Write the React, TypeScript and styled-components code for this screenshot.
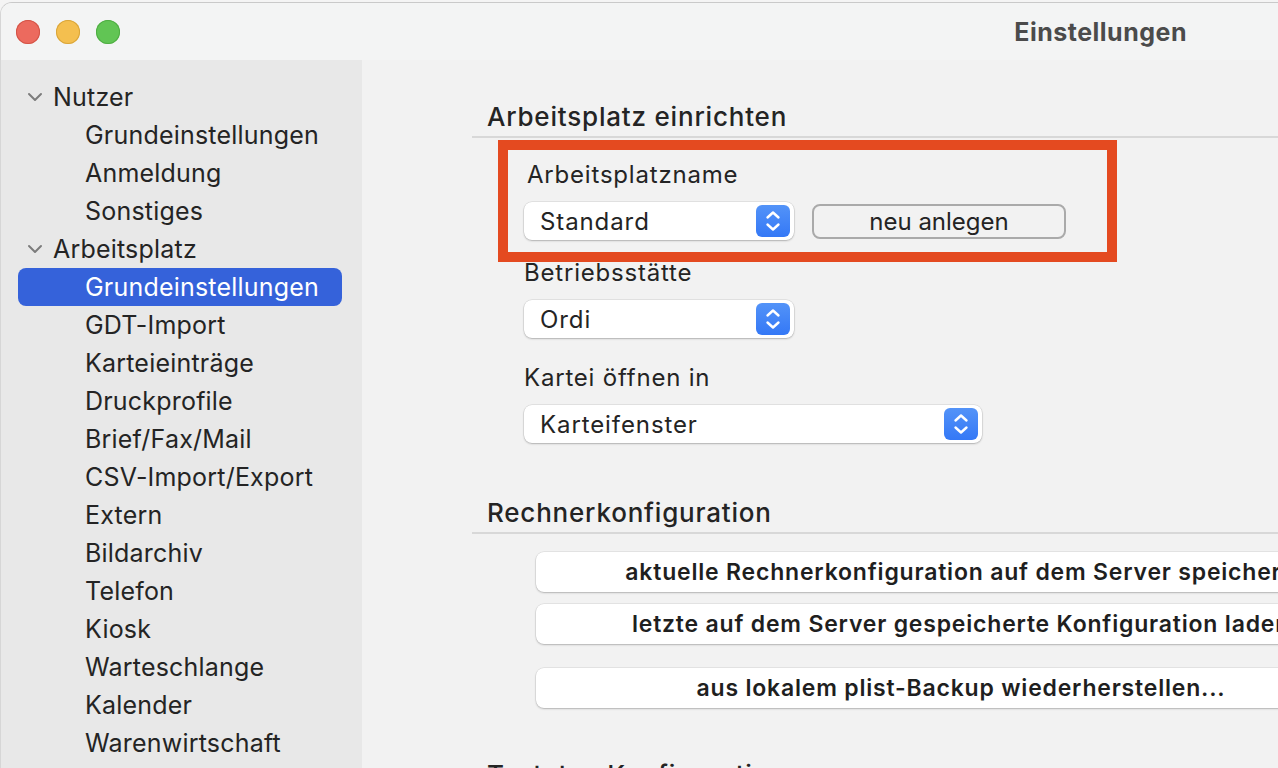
import styled, { createGlobalStyle } from "styled-components";

const GlobalStyle = createGlobalStyle`
  html, body {
    margin: 0;
    padding: 0;
    background: #f4f4f4;
    font-family: Inter, "Noto Sans", "Liberation Sans", sans-serif;
    color: #242424;
  }
`;

const StyledWindow = styled.div`
  width: 1278px;
  height: 766px;
  margin-top: 2px;
  border-top: 1px solid #c9c9c9;
  border-left: 1px solid #d6d6d6;
  border-top-left-radius: 12px;
  box-sizing: border-box;
  overflow: hidden;
  display: flex;
  flex-direction: column;
  background: #f2f2f2;
`;

const StyledTitleBar = styled.div`
  height: 57px;
  flex-shrink: 0;
  display: flex;
  align-items: center;
  background: #f3f4f4;
  padding-left: 15px;
`;

const StyledLight = styled.span<{ $color: string; $edge: string }>`
  width: 24px;
  height: 24px;
  border-radius: 50%;
  background: ${(p) => p.$color};
  box-shadow: inset 0 0 0 1px ${(p) => p.$edge};
  margin-right: 16px;
`;

const StyledTitle = styled.div`
  margin-left: auto;
  margin-right: 91px;
  font-size: 25px;
  font-weight: 700;
  color: #4b4b4b;
  letter-spacing: 0.5px;
`;

const StyledBody = styled.div`
  flex: 1;
  display: flex;
  min-height: 0;
`;

const StyledSidebar = styled.div`
  width: 361px;
  flex-shrink: 0;
  background: #e8e8e8;
  padding-top: 18px;
  box-sizing: border-box;
`;

const StyledItem = styled.div<{ $group?: boolean; $selected?: boolean }>`
  height: 38px;
  margin: 0 20px 0 17px;
  border-radius: 8px;
  display: flex;
  align-items: center;
  padding-left: ${(p) => (p.$group ? "9px" : "67px")};
  font-size: 25px;
  letter-spacing: 0.2px;
  color: ${(p) => (p.$selected ? "#ffffff" : "#242424")};
  background: ${(p) => (p.$selected ? "#3562da" : "transparent")};
`;

const StyledChevron = styled.svg`
  width: 16px;
  height: 10px;
  margin-right: 10px;
`;

const StyledContent = styled.div`
  flex: 1;
  padding-left: 110px;
  overflow: hidden;
`;

const StyledSectionHeader = styled.div<{ $top: number }>`
  margin-top: ${(p) => p.$top}px;
  padding: 0 0 4px 15px;
  height: 30px;
  line-height: 30px;
  font-size: 26px;
  font-weight: 500;
  letter-spacing: 0.8px;
  border-bottom: 2px solid #d8d8d8;
  white-space: nowrap;
`;

const StyledFields = styled.div`
  padding-left: 52px;
`;

const StyledField = styled.div<{ $top: number }>`
  position: relative;
  margin-top: ${(p) => p.$top}px;
`;

const StyledLabel = styled.div<{ $indent?: number }>`
  height: 28px;
  line-height: 28px;
  font-size: 24px;
  letter-spacing: 0.8px;
  padding-left: ${(p) => p.$indent ?? 0}px;
  margin-bottom: 13px;
`;

const StyledRow = styled.div`
  display: flex;
  align-items: center;
`;

const StyledSelect = styled.div<{ $width: number }>`
  width: ${(p) => p.$width}px;
  height: 38px;
  box-sizing: border-box;
  background: #ffffff;
  border-radius: 8px;
  box-shadow: 0 1px 2px rgba(0, 0, 0, 0.22), 0 0 0 0.5px rgba(0, 0, 0, 0.12);
  display: flex;
  align-items: center;
  padding: 0 4px 0 16px;
  font-size: 24px;
  letter-spacing: 0.9px;
`;

const StyledStepper = styled.span`
  margin-left: auto;
  width: 34px;
  height: 32px;
  border-radius: 6px;
  background: linear-gradient(#5393f8, #3478f6);
  display: flex;
  align-items: center;
  justify-content: center;
`;

const StyledPlainButton = styled.div`
  margin-left: 18px;
  width: 254px;
  height: 35px;
  box-sizing: border-box;
  border: 2px solid #aaaaaa;
  border-radius: 8px;
  display: flex;
  align-items: center;
  justify-content: center;
  font-size: 24px;
`;

const StyledHighlight = styled.div`
  position: absolute;
  left: -26px;
  top: -21px;
  width: 619px;
  height: 122px;
  box-sizing: border-box;
  border: 10px solid #e44a20;
  pointer-events: none;
`;

const StyledActions = styled.div`
  padding: 18px 0 0 64px;
  display: flex;
  flex-direction: column;
`;

const StyledActionButton = styled.div<{ $gap: number }>`
  width: 850px;
  height: 40px;
  margin-top: ${(p) => p.$gap}px;
  flex-shrink: 0;
  background: #ffffff;
  border-radius: 8px;
  box-shadow: 0 1px 2px rgba(0, 0, 0, 0.22), 0 0 0 0.5px rgba(0, 0, 0, 0.1);
  display: flex;
  align-items: center;
  justify-content: center;
  font-size: 23px;
  font-weight: 600;
  letter-spacing: 0.8px;
  color: #1f1f1f;
  white-space: nowrap;
`;

const sidebarItems = [
  { label: "Nutzer", group: true },
  { label: "Grundeinstellungen" },
  { label: "Anmeldung" },
  { label: "Sonstiges" },
  { label: "Arbeitsplatz", group: true },
  { label: "Grundeinstellungen", selected: true },
  { label: "GDT-Import" },
  { label: "Karteieinträge" },
  { label: "Druckprofile" },
  { label: "Brief/Fax/Mail" },
  { label: "CSV-Import/Export" },
  { label: "Extern" },
  { label: "Bildarchiv" },
  { label: "Telefon" },
  { label: "Kiosk" },
  { label: "Warteschlange" },
  { label: "Kalender" },
  { label: "Warenwirtschaft" },
];

const Stepper = () => (
  <StyledStepper>
    <svg width="34" height="32" viewBox="0 0 34 32" fill="none">
      <path d="M11.5 12.5 L17 7.5 L22.5 12.5" stroke="#fff" strokeWidth="2.4" strokeLinecap="round" strokeLinejoin="round" />
      <path d="M11.5 19.5 L17 24.5 L22.5 19.5" stroke="#fff" strokeWidth="2.4" strokeLinecap="round" strokeLinejoin="round" />
    </svg>
  </StyledStepper>
);

const Select = ({ value, width }: { value: string; width: number }) => (
  <StyledSelect $width={width}>
    {value}
    <Stepper />
  </StyledSelect>
);

const App = () => {
  return (
    <>
      <GlobalStyle />
      <StyledWindow>
        <StyledTitleBar>
          <StyledLight $color="#ec6a5e" $edge="#d35447" />
          <StyledLight $color="#f4bf4f" $edge="#d9a53a" />
          <StyledLight $color="#61c554" $edge="#4fad43" />
          <StyledTitle>Einstellungen</StyledTitle>
        </StyledTitleBar>
        <StyledBody>
          <StyledSidebar>
            {sidebarItems.map((item, index) => (
              <StyledItem key={index} $group={item.group} $selected={item.selected}>
                {item.group && (
                  <StyledChevron viewBox="0 0 16 10" fill="none">
                    <path d="M2 2 L8 8 L14 2" stroke="#7c7c7c" strokeWidth="2" strokeLinecap="round" strokeLinejoin="round" />
                  </StyledChevron>
                )}
                {item.label}
              </StyledItem>
            ))}
          </StyledSidebar>
          <StyledContent>
            <StyledSectionHeader $top={42}>Arbeitsplatz einrichten</StyledSectionHeader>
            <StyledFields>
              <StyledField $top={23}>
                <StyledLabel $indent={3}>Arbeitsplatzname</StyledLabel>
                <StyledRow>
                  <Select value="Standard" width={270} />
                  <StyledPlainButton>neu anlegen</StyledPlainButton>
                </StyledRow>
                <StyledHighlight />
              </StyledField>
              <StyledField $top={19}>
                <StyledLabel>Betriebsstätte</StyledLabel>
                <Select value="Ordi" width={270} />
              </StyledField>
              <StyledField $top={26}>
                <StyledLabel>Kartei öffnen in</StyledLabel>
                <Select value="Karteifenster" width={458} />
              </StyledField>
            </StyledFields>
            <StyledSectionHeader $top={55}>Rechnerkonfiguration</StyledSectionHeader>
            <StyledActions>
              <StyledActionButton $gap={0}>
                aktuelle Rechnerkonfiguration auf dem Server speichern
              </StyledActionButton>
              <StyledActionButton $gap={12}>
                letzte auf dem Server gespeicherte Konfiguration laden
              </StyledActionButton>
              <StyledActionButton $gap={24}>
                aus lokalem plist-Backup wiederherstellen...
              </StyledActionButton>
            </StyledActions>
            <StyledSectionHeader $top={52}>Tastatur-Konfiguration</StyledSectionHeader>
          </StyledContent>
        </StyledBody>
      </StyledWindow>
    </>
  );
};

export default App;
